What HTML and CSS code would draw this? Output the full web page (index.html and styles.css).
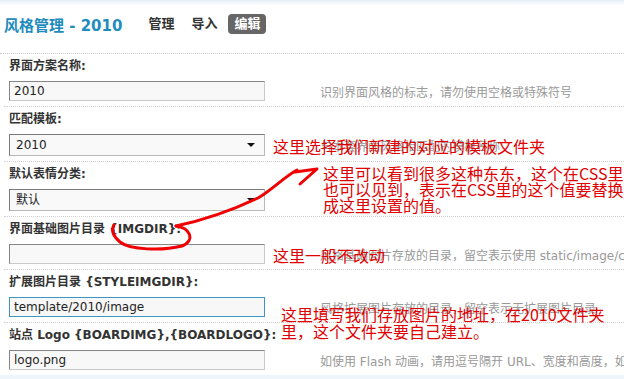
FILE: index.html
```html
<!DOCTYPE html>
<html lang="zh-CN">
<head>
<meta charset="utf-8">
<title>风格管理 - 2010</title>
<link rel="stylesheet" href="styles.css">
</head>
<body>
<div class="page">
  <div class="topband"></div>
  <div class="header">
    <h3 class="title">风格管理 - 2010</h3>
    <nav class="nav">
      <a class="nav-item">管理</a>
      <a class="nav-item">导入</a>
      <a class="nav-item active">编辑</a>
    </nav>
  </div>

  <div class="form">
    <div class="row">
      <div class="label">界面方案名称:</div>
      <div class="field">
        <div class="input">2010</div>
        <div class="hint">识别界面风格的标志，请勿使用空格或特殊符号</div>
      </div>
    </div>
    <div class="row">
      <div class="label">匹配模板:</div>
      <div class="field">
        <div class="select">2010<span class="arrow"></span></div>
        <div class="hint">与本套界面风格相匹配的模板名称</div>
      </div>
    </div>
    <div class="row">
      <div class="label">默认表情分类:</div>
      <div class="field">
        <div class="select">默认<span class="arrow"></span></div>
        <div class="hint"></div>
      </div>
    </div>
    <div class="row">
      <div class="label">界面基础图片目录 {IMGDIR}:</div>
      <div class="field">
        <div class="input"></div>
        <div class="hint">风格基础图片存放的目录，留空表示使用 static/image/common</div>
      </div>
    </div>
    <div class="row">
      <div class="label">扩展图片目录 {STYLEIMGDIR}:</div>
      <div class="field">
        <div class="input focus">template/2010/image</div>
        <div class="hint">风格扩展图片存放的目录，留空表示无扩展图片目录</div>
      </div>
    </div>
    <div class="row last">
      <div class="label">站点 Logo {BOARDIMG},{BOARDLOGO}:</div>
      <div class="field">
        <div class="input">logo.png</div>
        <div class="hint">如使用 Flash 动画，请用逗号隔开 URL、宽度和高度，如“logo.swf,80,40”</div>
      </div>
    </div>
  </div>
  <div class="bottomband"></div>

  <svg class="scribble" width="624" height="379" viewBox="0 0 624 379">
    <path d="M176,226 C190,228 196,240 182,246 C162,251 130,250 120,242 C113,236 111,230 114,225" />
    <path d="M176,226 C205,220 235,209 258,198 C272,190 284,177 297,170" />
    <path d="M295,172 L317,169 L300,184" />
  </svg>

  <div class="note note1">这里选择我们新建的对应的模板文件夹</div>
  <div class="note note2">这里可以看到很多这种东东，这个在CSS里<br>也可以见到，表示在CSS里的这个值要替换<br>成这里设置的值。</div>
  <div class="note note3">这里一般不改动</div>
  <div class="note note4">这里填写我们存放图片的地址，在2010文件夹<br>里，这个文件夹要自己建立。</div>
</div>
</body>
</html>
```

FILE: styles.css
```css
html, body {
  margin: 0;
  padding: 0;
  background: #fff;
  overflow: hidden;
}
body {
  font-family: "DejaVu Sans", "Noto Sans CJK SC", sans-serif;
  font-size: 12px;
  color: #333;
}
.page {
  position: relative;
  width: 624px;
  height: 379px;
  overflow: hidden;
}
.topband {
  height: 5px;
  background: linear-gradient(#e6eff7, #fbfdff);
}
.header {
  display: flex;
  align-items: center;
  height: 48px;
  padding-left: 4px;
  padding-bottom: 0;
  border-bottom: 1px dotted #c8c8c8;
  box-sizing: border-box;
  height: 49px;
}
.title {
  margin: -10px 20px 0 0;
  font-size: 15px;
  font-weight: bold;
  color: #1e8cbc;
  white-space: nowrap;
}
.nav {
  display: flex;
  gap: 5px;
  margin-top: -10px;
}
.nav-item {
  display: block;
  padding: 0 6px;
  height: 20px;
  line-height: 20px;
  font-size: 13px;
  font-weight: bold;
  color: #333;
  border-radius: 4px;
}
.nav-item.active {
  background: #666;
  color: #fff;
}
.form {
  padding-left: 4px;
}
.row {
  padding: 0 0 5px 5px;
  border-bottom: 1px dotted #d0d0d0;
}
.row.last {
  border-bottom: none;
}
.label {
  height: 27px;
  line-height: 22px;
  padding-top: 1px;
  box-sizing: border-box;
  font-weight: bold;
  color: #333;
  white-space: nowrap;
}
.field {
  display: flex;
  align-items: center;
  white-space: nowrap;
}
.input, .select {
  box-sizing: border-box;
  width: 256px;
  flex: none;
  padding-left: 4px;
  font-size: 12px;
  color: #222;
  background: #f8f8f8;
}
.input {
  height: 20px;
  line-height: 18px;
  border: 1px solid;
  border-color: #858585 #c9c9c9 #c9c9c9 #858585;
}
.input.focus {
  border-color: #3d96c0;
  background: #f7f7f7;
}
.select {
  position: relative;
  height: 22px;
  line-height: 20px;
  padding-left: 6px;
  border: 1px solid #8a8a8a;
  border-color: #7a7a7a #b8b8b8 #b8b8b8 #7a7a7a;
  background: #f9f9f9;
}
.select .arrow {
  position: absolute;
  right: 9px;
  top: 8px;
  width: 0;
  height: 0;
  border-left: 4px solid transparent;
  border-right: 4px solid transparent;
  border-top: 4px solid #111;
}
.hint {
  margin-left: 55px;
  color: #999;
  font-size: 12px;
}
.bottomband {
  height: 6px;
  background: #eef5fb;
}
.scribble {
  position: absolute;
  left: 0;
  top: 0;
  pointer-events: none;
}
.scribble path {
  fill: none;
  stroke: #f00000;
  stroke-width: 3;
  stroke-linecap: round;
  stroke-linejoin: round;
}
.note {
  position: absolute;
  font-family: "Noto Sans CJK SC", sans-serif;
  font-size: 16px;
  line-height: 16px;
  color: #e00000;
  white-space: nowrap;
}
.note1 { left: 273px; top: 138px; }
.note2 { left: 323px; top: 165px; }
.note3 { left: 273px; top: 247px; }
.note4 { left: 281px; top: 306px; line-height: 17px; }
```
